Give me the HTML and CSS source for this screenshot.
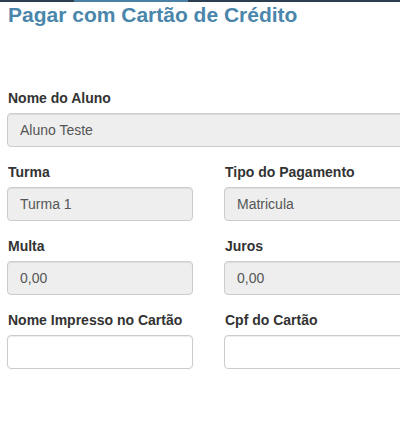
FILE: index.html
```html
<!DOCTYPE html>
<html lang="pt-BR">
<head>
<meta charset="utf-8">
<title>Pagar com Cartão de Crédito</title>
<link rel="stylesheet" href="styles.css">
</head>
<body>
<div class="topbar"><div class="topbar-active"></div></div>
<div class="page">
  <h1 class="title">Pagar com Cartão de Crédito</h1>
  <form class="form">
    <div class="group">
      <label class="label">Nome do Aluno</label>
      <input class="control readonly" type="text" value="Aluno Teste" readonly>
    </div>
    <div class="row">
      <div class="group">
        <label class="label">Turma</label>
        <input class="control readonly" type="text" value="Turma 1" readonly>
      </div>
      <div class="group">
        <label class="label">Tipo do Pagamento</label>
        <input class="control readonly" type="text" value="Matricula" readonly>
      </div>
    </div>
    <div class="row">
      <div class="group">
        <label class="label">Multa</label>
        <input class="control readonly" type="text" value="0,00" readonly>
      </div>
      <div class="group">
        <label class="label">Juros</label>
        <input class="control readonly" type="text" value="0,00" readonly>
      </div>
    </div>
    <div class="row">
      <div class="group">
        <label class="label">Nome Impresso no Cartão</label>
        <input class="control" type="text" value="">
      </div>
      <div class="group">
        <label class="label">Cpf do Cartão</label>
        <input class="control" type="text" value="">
      </div>
    </div>
  </form>
</div>
</body>
</html>
```
FILE: styles.css
```css
html, body {
  margin: 0;
  padding: 0;
  overflow: hidden;
  background: #fff;
}
body {
  font-family: "Liberation Sans", Arial, sans-serif;
  color: #333;
}
.topbar {
  height: 2px;
  background: #2c3e50;
}
.topbar-active {
  margin-left: 74px;
  width: 114px;
  height: 2px;
  background: #4a7fa6;
}
.page {
  padding-left: 7px;
  width: 403px;
}
.title {
  margin: 1px 0 0 1px;
  font-size: 21px;
  line-height: 23px;
  font-weight: bold;
  color: #4a86ab;
}
.form {
  margin-top: 62px;
}
.row {
  display: grid;
  grid-template-columns: 186px 186px;
  column-gap: 31px;
}
.group {
  margin-bottom: 15px;
}
.label {
  display: block;
  margin: 0 0 5px 1px;
  font-size: 14px;
  line-height: 20px;
  font-weight: bold;
  color: #333;
}
.control {
  display: block;
  width: 100%;
  height: 34px;
  box-sizing: border-box;
  margin: 0;
  padding: 6px 12px;
  border: 1px solid #ccc;
  border-radius: 4px;
  background: #fff;
  box-shadow: inset 0 1px 1px rgba(0,0,0,.075);
  font-family: "Liberation Sans", Arial, sans-serif;
  font-size: 14px;
  color: #555;
  outline: none;
}
.readonly {
  background: #eee;
}
```
